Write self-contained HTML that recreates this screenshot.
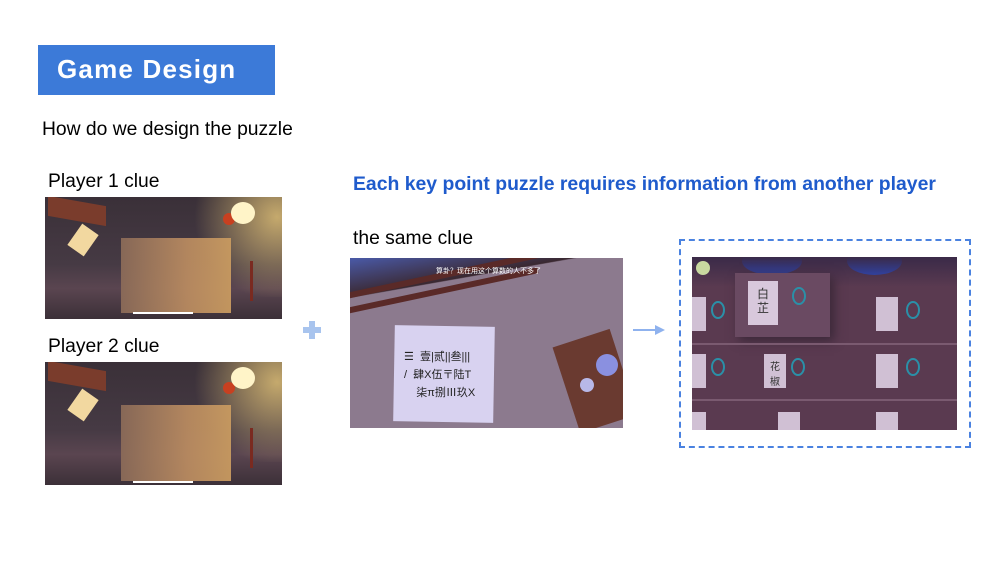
<!DOCTYPE html>
<html><head><meta charset="utf-8"><style>
*{margin:0;padding:0;box-sizing:border-box}
body{width:1000px;height:563px;background:#fff;position:relative;overflow:hidden;font-family:"Liberation Sans","Noto Sans CJK SC",sans-serif}
.a{position:absolute}
.t{position:absolute;font-size:19.3px;color:#000;white-space:nowrap}
</style></head><body>
<div class="a" style="left:38px;top:45px;width:237px;height:50px;background:#3c7ad8"></div>
<div class="t" style="left:57px;top:54px;font-size:26px;font-weight:bold;color:#fff;letter-spacing:1.2px">Game Design</div>
<div class="t" style="left:42px;top:119px">How do we design the puzzle</div>
<div class="t" style="left:48px;top:171px">Player 1 clue</div>
<div class="t" style="left:48px;top:336px">Player 2 clue</div>
<div class="t" style="left:353px;top:173px;font-weight:bold;color:#1f5bcc;font-size:19.4px">Each key point puzzle requires information from another player</div>
<div class="t" style="left:353px;top:228px">the same clue</div>

<!-- image 1 -->
<div class="a" style="left:45px;top:197px;width:237px;height:122px;background:linear-gradient(180deg,#3a3038 0%,#463a44 55%,#5a4550 75%,#3c3038 100%);overflow:hidden">
 <div class="a" style="left:120px;top:0;width:160px;height:100px;background:radial-gradient(circle at 70% 20%,rgba(255,220,130,.7),rgba(255,200,100,0) 60%)"></div>
 <div class="a" style="left:76px;top:41px;width:110px;height:75px;background:linear-gradient(90deg,#8a6a58,#b88a60 60%,#c89a60);opacity:.95"></div>
 <div class="a" style="left:3px;top:4px;width:58px;height:20px;background:#7a3c2c;transform:skewY(10deg)"></div>
 <div class="a" style="left:28px;top:30px;width:20px;height:26px;background:#f2d8a0;transform:rotate(35deg)"></div>
 <div class="a" style="left:178px;top:16px;width:12px;height:12px;border-radius:50%;background:#c84020"></div>
 <div class="a" style="left:186px;top:5px;width:24px;height:22px;border-radius:50%;background:#fff4c8"></div>
 <div class="a" style="left:205px;top:64px;width:3px;height:40px;background:#7a2a20"></div>
 <div class="a" style="left:88px;top:115px;width:60px;height:2px;background:#fff"></div>
</div>
<!-- image 2 -->
<div class="a" style="left:45px;top:362px;width:237px;height:123px;background:linear-gradient(180deg,#3a3038 0%,#463a44 55%,#5a4550 75%,#3c3038 100%);overflow:hidden">
 <div class="a" style="left:120px;top:0;width:160px;height:100px;background:radial-gradient(circle at 70% 20%,rgba(255,220,130,.7),rgba(255,200,100,0) 60%)"></div>
 <div class="a" style="left:76px;top:43px;width:110px;height:76px;background:linear-gradient(90deg,#8a6a58,#b88a60 60%,#c89a60);opacity:.95"></div>
 <div class="a" style="left:3px;top:4px;width:58px;height:20px;background:#7a3c2c;transform:skewY(10deg)"></div>
 <div class="a" style="left:28px;top:30px;width:20px;height:26px;background:#f2d8a0;transform:rotate(35deg)"></div>
 <div class="a" style="left:178px;top:20px;width:12px;height:12px;border-radius:50%;background:#c84020"></div>
 <div class="a" style="left:186px;top:5px;width:24px;height:22px;border-radius:50%;background:#fff4c8"></div>
 <div class="a" style="left:205px;top:66px;width:3px;height:40px;background:#7a2a20"></div>
 <div class="a" style="left:88px;top:119px;width:60px;height:2px;background:#fff"></div>
</div>

<!-- plus -->
<div class="a" style="left:303px;top:327px;width:18px;height:6px;background:#a8c4ee"></div>
<div class="a" style="left:309px;top:321px;width:6px;height:18px;background:#a8c4ee"></div>

<!-- image 3 -->
<div class="a" style="left:350px;top:258px;width:273px;height:170px;background:#8c7a8e;overflow:hidden">
 <div class="a" style="left:0;top:0;width:273px;height:50px;background:linear-gradient(170deg,#4a5aa8 0%,#3a2830 40%,#8c7a8e 41%)"></div>
 <div class="a" style="left:-10px;top:15px;width:200px;height:6px;background:#5a2a28;transform:rotate(-12deg)"></div>
 <div class="a" style="left:-10px;top:30px;width:200px;height:6px;background:#5a2a28;transform:rotate(-12deg)"></div>
 <div class="a" style="left:44px;top:68px;width:100px;height:96px;background:#d8d2f0;transform:rotate(1deg)"></div>
 <div class="a" style="left:54px;top:90px;font-size:11px;color:#222;line-height:18px">☰&nbsp; 壹|贰||叁|||<br>/&nbsp; 肆X伍〒陆T<br>&nbsp;&nbsp;&nbsp; 柒π捌Ⅲ玖X</div>
 <div class="a" style="left:215px;top:78px;width:60px;height:90px;background:#6a3a30;transform:rotate(-18deg)"></div>
 <div class="a" style="left:246px;top:96px;width:22px;height:22px;border-radius:50%;background:#8a90e0"></div>
 <div class="a" style="left:230px;top:120px;width:14px;height:14px;border-radius:50%;background:#b8b8e8"></div>
 <div class="a" style="left:86px;top:8px;font-size:7px;color:#fff">算卦？现在用这个算数的人不多了</div>
</div>

<!-- arrow -->
<div class="a" style="left:633px;top:329px;width:22px;height:2px;background:#8fb2ee"></div>
<div class="a" style="left:655px;top:325px;width:0;height:0;border-left:10px solid #8fb2ee;border-top:5px solid transparent;border-bottom:5px solid transparent"></div>

<!-- dashed box -->
<div class="a" style="left:679px;top:239px;width:292px;height:209px;border:2px dashed #4a82e0"></div>

<!-- image 4 -->
<div class="a" style="left:692px;top:257px;width:265px;height:173px;background:#5a3a50;overflow:hidden">
 <div class="a" style="left:50px;top:-10px;width:60px;height:28px;border-radius:50%;background:#2a50d8"></div>
 <div class="a" style="left:155px;top:-10px;width:55px;height:28px;border-radius:50%;background:#2a50d8"></div>
 <div class="a" style="left:0;top:0;width:265px;height:30px;background:linear-gradient(#3a2a48,rgba(0,0,0,0))"></div>
 <div class="a" style="left:43px;top:16px;width:95px;height:64px;background:#6a4a62;box-shadow:4px 4px 10px #3a2838"></div>
 <div class="a" style="left:0;top:86px;width:265px;height:2px;background:#7a5a70"></div>
 <div class="a" style="left:0;top:142px;width:265px;height:2px;background:#7a5a70"></div>
 <div class="a" style="left:56px;top:24px;width:30px;height:44px;background:#d8c8dc;font-size:12px;color:#333;text-align:center;padding-top:6px;line-height:14px">白<br>芷</div>
 <div class="a" style="left:0;top:40px;width:14px;height:34px;background:#d0c0d4"></div>
 <div class="a" style="left:184px;top:40px;width:22px;height:34px;background:#d0c0d4"></div>
 <div class="a" style="left:0;top:97px;width:14px;height:34px;background:#d0c0d4"></div>
 <div class="a" style="left:72px;top:97px;width:22px;height:34px;background:#d0c0d4;font-size:10px;text-align:center;padding-top:4px;color:#333">花<br>椒</div>
 <div class="a" style="left:184px;top:97px;width:22px;height:34px;background:#d0c0d4"></div>
 <div class="a" style="left:0;top:155px;width:14px;height:20px;background:#d0c0d4"></div>
 <div class="a" style="left:86px;top:155px;width:22px;height:20px;background:#d0c0d4"></div>
 <div class="a" style="left:184px;top:155px;width:22px;height:20px;background:#d0c0d4"></div>
 <div class="a" style="left:19px;top:44px;width:14px;height:18px;border:2px solid #2a90a8;border-radius:50%"></div>
 <div class="a" style="left:100px;top:30px;width:14px;height:18px;border:2px solid #2a90a8;border-radius:50%"></div>
 <div class="a" style="left:214px;top:44px;width:14px;height:18px;border:2px solid #2a90a8;border-radius:50%"></div>
 <div class="a" style="left:19px;top:101px;width:14px;height:18px;border:2px solid #2a90a8;border-radius:50%"></div>
 <div class="a" style="left:99px;top:101px;width:14px;height:18px;border:2px solid #2a90a8;border-radius:50%"></div>
 <div class="a" style="left:214px;top:101px;width:14px;height:18px;border:2px solid #2a90a8;border-radius:50%"></div>
 <div class="a" style="left:4px;top:4px;width:14px;height:14px;border-radius:50%;background:#c8d8a0"></div>
</div>
</body></html>
